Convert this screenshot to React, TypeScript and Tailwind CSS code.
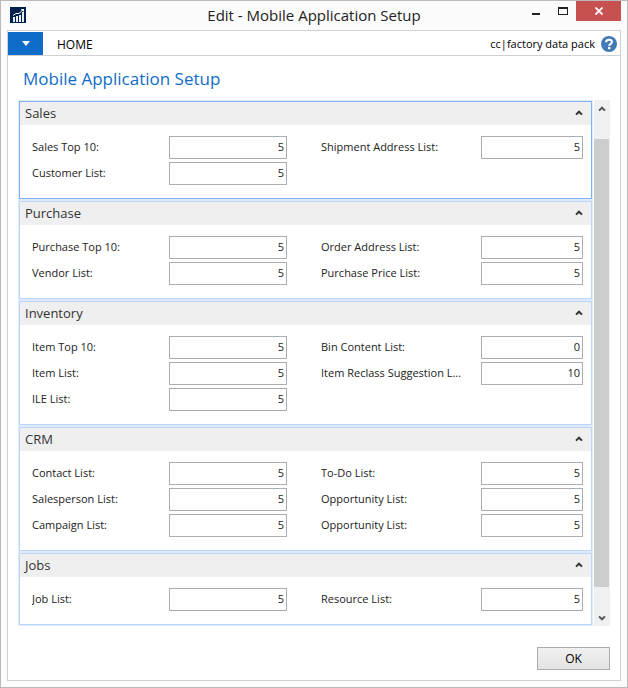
import { useId, useState } from "react";

type Field = { label: string; value: string };
type Group = { title: string; left: Field[]; right: Field[]; active?: boolean };

const groups: Group[] = [
  {
    title: "Sales",
    active: true,
    left: [
      { label: "Sales Top 10:", value: "5" },
      { label: "Customer List:", value: "5" },
    ],
    right: [{ label: "Shipment Address List:", value: "5" }],
  },
  {
    title: "Purchase",
    left: [
      { label: "Purchase Top 10:", value: "5" },
      { label: "Vendor List:", value: "5" },
    ],
    right: [
      { label: "Order Address List:", value: "5" },
      { label: "Purchase Price List:", value: "5" },
    ],
  },
  {
    title: "Inventory",
    left: [
      { label: "Item Top 10:", value: "5" },
      { label: "Item List:", value: "5" },
      { label: "ILE List:", value: "5" },
    ],
    right: [
      { label: "Bin Content List:", value: "0" },
      { label: "Item Reclass Suggestion L...", value: "10" },
    ],
  },
  {
    title: "CRM",
    left: [
      { label: "Contact List:", value: "5" },
      { label: "Salesperson List:", value: "5" },
      { label: "Campaign List:", value: "5" },
    ],
    right: [
      { label: "To-Do List:", value: "5" },
      { label: "Opportunity List:", value: "5" },
      { label: "Opportunity List:", value: "5" },
    ],
  },
  {
    title: "Jobs",
    left: [{ label: "Job List:", value: "5" }],
    right: [{ label: "Resource List:", value: "5" }],
  },
];

function Chevron({ className }: { className: string }) {
  return (
    <svg viewBox="0 0 8 7" className={className} aria-hidden="true">
      <path d="M1 4.600 L4 1.700 L7 4.600" fill="none" stroke="currentColor" strokeWidth="2" />
    </svg>
  );
}

function AppLogo() {
  return (
    <svg viewBox="0 0 16 16" className="size-4" aria-hidden="true">
      <rect width="16" height="16" fill="#00204e" />
      <path d="M3 10h2v5H3zM6 9h2v6H6zM9 8h2v7H9zM12 5h2v10h-2z" fill="#e8edf3" />
      <path d="M3 8.500 L6 6.500 L9 6.500 L13 2.800" fill="none" stroke="#fff" strokeWidth="1" />
      <path d="M10.500 2H14v3z" fill="#fff" />
    </svg>
  );
}

function HelpIcon() {
  return (
    <svg viewBox="0 0 16 16" className="size-4" aria-hidden="true">
      <circle cx="8" cy="8" r="8" fill="#427ab5" />
      <path
        d="M5 6.200C5 4.400 6.300 3.700 8 3.700s3 .8 3 2.300c0 1.800-2.800 1.900-2.800 3.900"
        fill="none"
        stroke="#fff"
        strokeWidth="2"
      />
      <rect x="7" y="11" width="2.400" height="2.200" fill="#fff" />
    </svg>
  );
}

function FieldRow({ field, labelClass }: { field: Field; labelClass: string }) {
  const id = useId();
  return (
    <div className="flex items-center">
      <label htmlFor={id} className={`shrink-0 truncate ${labelClass}`}>
        {field.label}
      </label>
      <input
        id={id}
        type="text"
        defaultValue={field.value}
        className="h-[23px] w-0 min-w-0 flex-1 border border-[#abadb3] bg-white px-[2px] pb-[2px] text-right outline-none focus:border-[#7eb4ea]"
      />
    </div>
  );
}

function FastTab({ group }: { group: Group }) {
  const [open, setOpen] = useState(true);
  return (
    <section
      className={`border bg-white ${group.active ? "border-[#7fb1fa]" : "border-[#bcd5fa]"}`}
    >
      <h2>
        <button
          type="button"
          aria-expanded={open}
          onClick={() => setOpen(!open)}
          className="flex h-[23px] w-full items-center justify-between bg-[#efefef] pr-2 pl-[5px] text-[13px] text-[#333]"
        >
          {group.title}
          <Chevron className={open ? "h-[7px] w-2" : "h-[7px] w-2 rotate-180"} />
        </button>
      </h2>
      {open && (
        <div className="grid grid-cols-[255fr_262fr] gap-x-[34px] pt-[11px] pr-2 pb-[13px] pl-3">
          <div className="flex min-w-0 flex-col gap-[3px]">
            {group.left.map((field, i) => (
              <FieldRow key={i} field={field} labelClass="w-[137px]" />
            ))}
          </div>
          <div className="flex min-w-0 flex-col gap-[3px]">
            {group.right.map((field, i) => (
              <FieldRow key={i} field={field} labelClass="w-[160px]" />
            ))}
          </div>
        </div>
      )}
    </section>
  );
}

export default function App() {
  return (
    <div className="flex min-h-screen flex-col border border-[#bababa] bg-[#fbfbfb] px-[6px] pb-[6px] font-['Open_Sans','Noto_Sans',sans-serif] text-[11px] text-[#222]">
      <header className="grid h-[29px] grid-cols-[1fr_auto_1fr] items-start">
        <div className="pt-[6px] pl-[3px]">
          <AppLogo />
        </div>
        <h1 className="text-[15px] leading-[29px]">Edit - Mobile Application Setup</h1>
        <div className="flex justify-end">
          <button type="button" aria-label="Minimize" className="flex h-5 w-[27px] items-end justify-center pb-[6px]">
            <span className="h-[2px] w-2 bg-[#222]" />
          </button>
          <button type="button" aria-label="Maximize" className="flex h-5 w-[27px] items-center justify-center">
            <span className="h-2 w-[10px] border border-t-2 border-[#222]" />
          </button>
          <button type="button" aria-label="Close" className="flex h-5 w-[45px] items-center justify-center bg-[#c75050]">
            <svg viewBox="0 0 8 8" className="size-2" aria-hidden="true">
              <path d="M0.500 0.500 L7.500 7.500 M7.500 0.500 L0.500 7.500" stroke="#fff" strokeWidth="1.800" />
            </svg>
          </button>
        </div>
      </header>

      <main className="flex flex-1 flex-col border border-[#d0d0d0] bg-white">
        <nav className="flex h-[25px] items-center border-b border-[#d0d0d0] pt-px pr-[3px] text-black">
          <button
            type="button"
            aria-label="Application menu"
            className="flex h-[23px] w-[35px] items-center justify-center bg-[#106cc8]"
          >
            <svg viewBox="0 0 8 5" className="h-[5px] w-2" aria-hidden="true">
              <path d="M0 0h8L4 5z" fill="#fff" />
            </svg>
          </button>
          <button type="button" className="px-[14px] pt-[2px] text-[12px]">
            HOME
          </button>
          <span className="ml-auto pt-[2px] pr-[6px]">cc|factory data pack</span>
          <button type="button" aria-label="Help">
            <HelpIcon />
          </button>
        </nav>

        <div className="flex flex-1 flex-col pr-[10px] pb-[10px] pl-[10px]">
          <h2 className="h-11 pl-[5px] text-[17px] leading-[46px] text-[#106cc8]">Mobile Application Setup</h2>
          <div className="flex gap-px">
            <div className="flex min-w-0 flex-1 flex-col gap-[2px] bg-[#dfeafa] p-px">
              {groups.map((group) => (
                <FastTab key={group.title} group={group} />
              ))}
            </div>
            <div className="flex w-4 flex-col bg-[#f0f0f0] text-[#555]" aria-hidden="true">
              <div className="flex h-[39px] justify-center pt-[6px]">
                <Chevron className="h-[7px] w-2" />
              </div>
              <div className="mr-px flex-1 bg-[#cdcdcd]" />
              <div className="flex h-[39px] items-end justify-center pb-[5px]">
                <Chevron className="h-[7px] w-2 rotate-180" />
              </div>
            </div>
          </div>
          <div className="mt-auto flex justify-end pt-[21px]">
            <button
              type="button"
              className="h-[23px] w-[73px] border border-[#acacac] bg-linear-to-b from-[#f0f0f0] to-[#e3e3e3] text-[12px] text-black"
            >
              OK
            </button>
          </div>
        </div>
      </main>
    </div>
  );
}
